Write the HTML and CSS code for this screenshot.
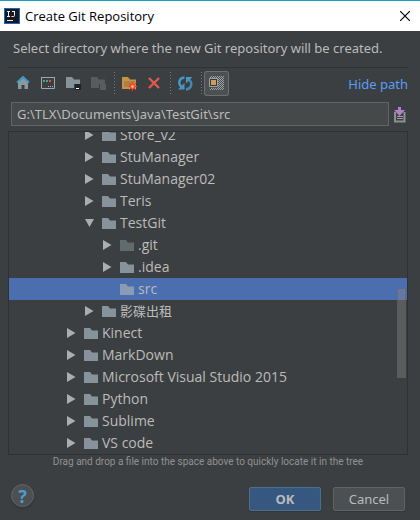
FILE: index.html
```html
<!DOCTYPE html>
<html lang="en">
<head>
<meta charset="utf-8">
<title>Create Git Repository</title>
<link rel="stylesheet" href="styles.css">
</head>
<body>
<svg class="defs" aria-hidden="true">
  <symbol id="folder" viewBox="0 0 14 11"><path d="M0 0H6L8 2.500H14V11H0Z" fill="currentColor"/></symbol>
  <symbol id="closed" viewBox="0 0 9 10"><path d="M0 0L8.500 5L0 10Z" fill="currentColor"/></symbol>
  <symbol id="open" viewBox="0 0 9 10"><path d="M0 1H9L4.500 9Z" fill="currentColor"/></symbol>
</svg>
<header class="titlebar">
  <svg class="logo" viewBox="0 0 16 16" aria-hidden="true">
    <rect width="16" height="16" fill="#1668c4"/><rect x="1" y="1" width="14" height="14" fill="#16191d"/>
    <path d="M3 3.500H6M4.500 3.500V8.500M3 8.500H6M8 3.500H11M10.500 3.500V7.500Q10.500 8.500 9.500 8.500H7.500M3 12.500H9" fill="none" stroke="#eee"/>
  </svg>
  <h1 class="title">Create Git Repository</h1>
  <button class="close" aria-label="Close"><svg viewBox="0 0 10 10"><path d="M0 0L10 10M10 0L0 10" stroke="#000" stroke-width="1.200"/></svg></button>
</header>
<main class="dialog">
  <p class="message">Select directory where the new Git repository will be created.</p>
  <div class="toolbar">
    <button class="tool" aria-label="Home"><svg viewBox="0 0 25 25">
      <path d="M7 11L12 7L17 11V18H13.500V14H10.500V18H7Z" fill="#8a989f"/>
      <path d="M6 11.500L12 6L18 11.500" fill="none" stroke="#3b9dc9" stroke-width="1.800"/></svg></button>
    <button class="tool" aria-label="Project directory"><svg viewBox="0 0 25 25">
      <path d="M5.500 6.500H18.500V17.500H5.500Z" fill="none" stroke="#9aa7b0"/><path d="M5 6.500H19" stroke="#9aa7b0"/>
      <path d="M7 9h2v2H7z" fill="#62a33c"/><path d="M10 9h2v2h-2z" fill="#3b9dc9"/><path d="M13 9h2v2h-2z" fill="#e2553a"/>
      <path d="M12 15h1v1h-1zM14 15h1v1h-1zM16 15h1v1h-1z" fill="#aab2b7"/></svg></button>
    <button class="tool" aria-label="Module directory"><svg viewBox="0 0 25 25">
      <path d="M5 6H11L13 8.500H19V17H5Z" fill="#87939a"/><path d="M13 13h8v8h-8z" fill="#3c3f41"/>
      <path d="M14 13h6v6h-6z" fill="#202224"/><path d="M15 17h3v1h-3z" fill="#fff"/></svg></button>
    <button class="tool" aria-label="Module" disabled><svg viewBox="0 0 25 25">
      <path d="M5 6H11L13 8.500H19V17H5Z" fill="#595b5c"/><path d="M13 13h8v8h-8z" fill="#3c3f41"/><path d="M14 13h6v6h-6z" fill="#595b5c"/></svg></button>
    <span class="separator"></span>
    <button class="tool" aria-label="New folder"><svg viewBox="0 0 25 25">
      <path d="M5 6H11L13 8.500H19V18H5Z" fill="#c69246"/><path d="M7 10H18V16H7Z" fill="#ad8146"/>
      <path d="M15.500 11V20M11 15.500H20M12 12L19 19M19 12L12 19" stroke="#ef3e32"/><circle cx="15.500" cy="15.500" r="2.600" fill="#ff4438"/><circle cx="15.500" cy="15.500" r="1.200" fill="#ffe07a"/></svg></button>
    <button class="tool" aria-label="Delete"><svg viewBox="0 0 25 25"><path d="M7 7L17 17M17 7L7 17" stroke="#db5c4c" stroke-width="2.400"/></svg></button>
    <span class="separator"></span>
    <button class="tool" aria-label="Refresh"><svg viewBox="0 0 25 25">
      <path d="M11.500 6.500C6 7 4.500 12.500 8.500 16" fill="none" stroke="#4896c3" stroke-width="2.400"/><path d="M5 18.500L11.500 18.500V12Z" fill="#4896c3"/>
      <path d="M13 18.500C18.500 18 20 12 16 8.500" fill="none" stroke="#4487b0" stroke-width="2.400"/><path d="M19.500 6L13 6V12.500Z" fill="#4896c3"/></svg></button>
    <span class="separator"></span>
    <button class="tool pressed" aria-label="Show hidden files" aria-pressed="true"><svg viewBox="0 0 25 25">
      <defs><pattern id="dots" width="2" height="2" patternUnits="userSpaceOnUse"><path d="M0 0h1v1H0zM1 1h1v1H1z" fill="#9b9fa0"/></pattern></defs>
      <path d="M6 5h14v14H6z" fill="url(#dots)"/><path d="M5 7h9v10H5z" fill="#4c5052"/>
      <path d="M5.500 7.500h8v8h-8z" fill="#353739" stroke="#a0a3a4"/><path d="M7 9h5v5H7z" fill="#d09a5b"/></svg></button>
    <a class="path-link" href="#">Hide path</a>
  </div>
  <div class="path-row">
    <input class="path" type="text" aria-label="Path" value="G:\TLX\Documents\Java\TestGit\src">
    <button class="history" aria-label="Path history"><svg viewBox="0 0 12 17">
      <path d="M1 6V15.500H10.500V6" fill="none" stroke="#8d8f90" stroke-width="2"/><path d="M3 10.500H9M3 12.500H9" stroke="#9c9fa0"/>
      <path d="M4 1H7V4H11L5.500 10L0 4H4Z" fill="#ae82c4"/></svg></button>
  </div>
  <div class="tree">
    <ul class="rows" role="tree">
      <li class="row level2" role="treeitem"><svg class="arrow"><use href="#closed"/></svg><svg class="folder"><use href="#folder"/></svg>Store_v2</li>
      <li class="row level2" role="treeitem"><svg class="arrow"><use href="#closed"/></svg><svg class="folder"><use href="#folder"/></svg>StuManager</li>
      <li class="row level2" role="treeitem"><svg class="arrow"><use href="#closed"/></svg><svg class="folder"><use href="#folder"/></svg>StuManager02</li>
      <li class="row level2" role="treeitem"><svg class="arrow"><use href="#closed"/></svg><svg class="folder"><use href="#folder"/></svg>Teris</li>
      <li class="row level2" role="treeitem" aria-expanded="true"><svg class="arrow"><use href="#open"/></svg><svg class="folder"><use href="#folder"/></svg>TestGit</li>
      <li class="row level3" role="treeitem"><svg class="arrow"><use href="#closed"/></svg><svg class="folder hidden-folder"><use href="#folder"/></svg>.git</li>
      <li class="row level3" role="treeitem"><svg class="arrow"><use href="#closed"/></svg><svg class="folder"><use href="#folder"/></svg>.idea</li>
      <li class="row level3 selected" role="treeitem" aria-selected="true"><svg class="arrow"></svg><svg class="folder"><use href="#folder"/></svg>src</li>
      <li class="row level2 cjk" role="treeitem" lang="zh"><svg class="arrow"><use href="#closed"/></svg><svg class="folder"><use href="#folder"/></svg>影碟出租</li>
      <li class="row" role="treeitem"><svg class="arrow"><use href="#closed"/></svg><svg class="folder"><use href="#folder"/></svg>Kinect</li>
      <li class="row" role="treeitem"><svg class="arrow"><use href="#closed"/></svg><svg class="folder"><use href="#folder"/></svg>MarkDown</li>
      <li class="row" role="treeitem"><svg class="arrow"><use href="#closed"/></svg><svg class="folder"><use href="#folder"/></svg>Microsoft Visual Studio 2015</li>
      <li class="row" role="treeitem"><svg class="arrow"><use href="#closed"/></svg><svg class="folder"><use href="#folder"/></svg>Python</li>
      <li class="row" role="treeitem"><svg class="arrow"><use href="#closed"/></svg><svg class="folder"><use href="#folder"/></svg>Sublime</li>
      <li class="row" role="treeitem"><svg class="arrow"><use href="#closed"/></svg><svg class="folder"><use href="#folder"/></svg>VS code</li>
    </ul>
    <span class="thumb"></span>
  </div>
  <p class="hint">Drag and drop a file into the space above to quickly locate it in the tree</p>
  <footer class="actions">
    <button class="help" aria-label="Help">?</button>
    <button class="button primary">OK</button>
    <button class="button">Cancel</button>
  </footer>
</main>
</body>
</html>
```
FILE: styles.css
```css
* { box-sizing: border-box; }
body {
  margin: 0;
  height: 100vh;
  display: flex;
  flex-direction: column;
  background: #3c3f41;
  color: #bbb;
  font: 13px/20px "Noto Sans", "Noto Sans CJK SC", sans-serif;
}
button, input { font: inherit; color: inherit; padding: 0; }
button { border: 0; background: none; }
svg { display: block; flex: none; }
.defs { position: absolute; width: 0; height: 0; }
.titlebar {
  flex: none;
  display: flex;
  align-items: center;
  height: 31px;
  padding: 0 10px 0 4px;
  border-top: 1px solid #1a9fc0;
  background: #fff;
  color: #000;
}
.logo { width: 16px; height: 16px; }
.title { flex: 1; margin: 0 0 0 5px; font-family: "Open Sans", sans-serif; font-size: 13px; font-weight: 400; }
.close svg { width: 10px; height: 10px; }
.dialog { flex: 1; min-height: 0; display: flex; flex-direction: column; padding: 0 12px 9px 8px; }
.message { flex: none; height: 36px; margin: 0; padding: 7px 5px; white-space: nowrap; }
.toolbar {
  flex: none;
  display: flex;
  align-items: center;
  height: 32px;
  padding-left: 3px;
  border-top: 1px solid #2f3133;
}
.tool { width: 25px; height: 25px; border-radius: 3px; }
.tool svg { width: 25px; height: 25px; }
.pressed { background: #4c5052; box-shadow: inset 0 0 0 1px #6c6f71; }
.separator { width: 6px; height: 23px; display: flex; justify-content: center; }
.separator::before {
  content: "";
  width: 1px;
  background: repeating-linear-gradient(#76797a 0 1px, transparent 1px 3px);
}
.path-link { margin-left: auto; color: #589df6; text-decoration: none; }
.path-row { flex: none; display: flex; align-items: center; gap: 5px; padding: 3px 2px 5px 3px; }
.path {
  flex: 1;
  min-width: 0;
  height: 24px;
  padding: 0 5px;
  border: 1px solid #646464;
  background: #45494a;
}
.history svg { width: 12px; height: 17px; }
.tree {
  position: relative;
  flex: 1;
  min-height: 0;
  display: flex;
  flex-direction: column;
  justify-content: flex-end;
  overflow: hidden;
  border: 1px solid #2f3133;
  font-family: "Open Sans", "Noto Sans CJK SC", sans-serif;
  font-size: 14px;
}
.rows { flex: none; margin: 0; padding: 0; list-style: none; }
.row { display: flex; align-items: center; height: 22px; padding-left: 58px; }
.level2 { padding-left: 76px; }
.level3 { padding-left: 94px; }
.cjk { font-size: 13px; }
.selected { background: #4b6eaf; }
.arrow { width: 9px; height: 10px; margin-right: 8px; color: #adadad; }
.folder { width: 14px; height: 11px; margin-right: 4px; color: #87939a; }
.selected .folder { color: #8b9bb4; }
.hidden-folder { color: #616a6d; }
.thumb {
  position: absolute;
  top: 48.5%;
  right: 1px;
  width: 9px;
  height: 28%;
  border: 1px solid rgba(90, 90, 90, .4);
  background: rgba(140, 140, 140, .38);
}
.hint { flex: none; margin: 0; font-family: Roboto, sans-serif; font-size: 10px; line-height: 14px; text-align: center; white-space: nowrap; color: #919191; }
.actions { flex: none; display: flex; align-items: flex-end; gap: 12px; height: 42px; padding-right: 3px; }
.help {
  width: 23px;
  height: 23px;
  margin: 0 auto 4px 3px;
  border: 1px solid #616567;
  border-radius: 50%;
  background: #4c5052;
  box-shadow: 0 2px 2px #353739;
  color: #4a9cc9;
  font-size: 18px;
  font-weight: 700;
  line-height: 20px;
}
.button {
  width: 72px;
  height: 24px;
  border: 1px solid #606365;
  border-radius: 2px;
  background: #4c5052;
  box-shadow: 0 1px 1px #333638;
}
.primary { border-color: #4c708c; background: #365880; font-weight: 700; }
```
